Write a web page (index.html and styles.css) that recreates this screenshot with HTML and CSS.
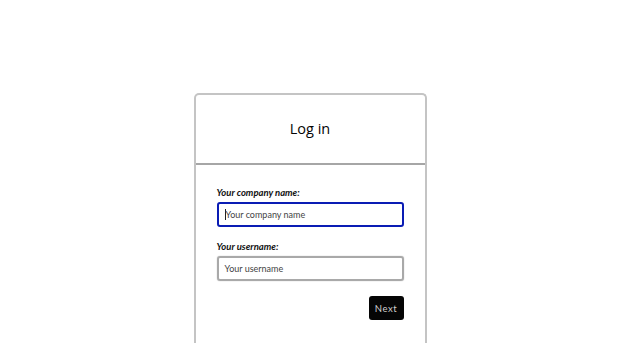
FILE: index.html
```html
<!DOCTYPE html>
<html>
<head>
<meta charset="utf-8">
<link rel="stylesheet" href="styles.css">
</head>
<body>
<div class="card">
  <div class="card-header">
    <h1 class="title">Log in</h1>
  </div>
  <form class="card-body">
    <label class="field">
      <span class="label">Your company name:</span>
      <span class="input focused"><span class="caret"></span>Your company name</span>
    </label>
    <label class="field">
      <span class="label">Your username:</span>
      <span class="input">Your username</span>
    </label>
    <div class="actions">
      <span class="btn">Next</span>
    </div>
  </form>
</div>
</body>
</html>
```
FILE: styles.css
```css
html, body {
  margin: 0;
  padding: 0;
  background: #fff;
}
body {
  font-family: Lato, "Open Sans", sans-serif;
  color: #111;
}
.card {
  width: 229px;
  margin: 93px auto 0;
  border: 2px solid #c4c4c4;
  border-bottom: none;
  border-radius: 5px 5px 0 0;
  height: 260px;
}
.card-header {
  height: 68px;
  display: flex;
  align-items: center;
  justify-content: center;
  border-bottom: 2px solid #a6a6a6;
}
.title {
  margin: -1px 0 0;
  font-family: "Open Sans", Lato, sans-serif;
  font-size: 14.5px;
  line-height: 20px;
  font-weight: 400;
  color: #050505;
}
.card-body {
  padding: 22px 21px 0;
  display: flex;
  flex-direction: column;
}
.field {
  display: flex;
  flex-direction: column;
  margin-bottom: 14px;
}
.label {
  font-size: 9.5px;
  font-style: italic;
  font-weight: 700;
  color: #111;
  line-height: 12px;
  margin-bottom: 3px;
}
.input {
  box-sizing: border-box;
  height: 25px;
  border: 2px solid #a9a9a9;
  border-radius: 3px;
  box-shadow: 0 0 1px #999;
  display: flex;
  align-items: center;
  padding-left: 6px;
  font-size: 9px;
  color: #444;
}
.input.focused {
  border-color: #0a1cb4;
  box-shadow: none;
}
.caret {
  display: inline-block;
  width: 1px;
  height: 11px;
  background: #222;
}
.actions {
  display: flex;
  justify-content: flex-end;
  margin-top: 1px;
}
.btn {
  background: #050505;
  color: #cfcfcf;
  font-size: 9.5px;
  letter-spacing: 0.6px;
  border-radius: 3px;
  width: 35px;
  height: 24px;
  display: flex;
  align-items: center;
  justify-content: center;
}
```
